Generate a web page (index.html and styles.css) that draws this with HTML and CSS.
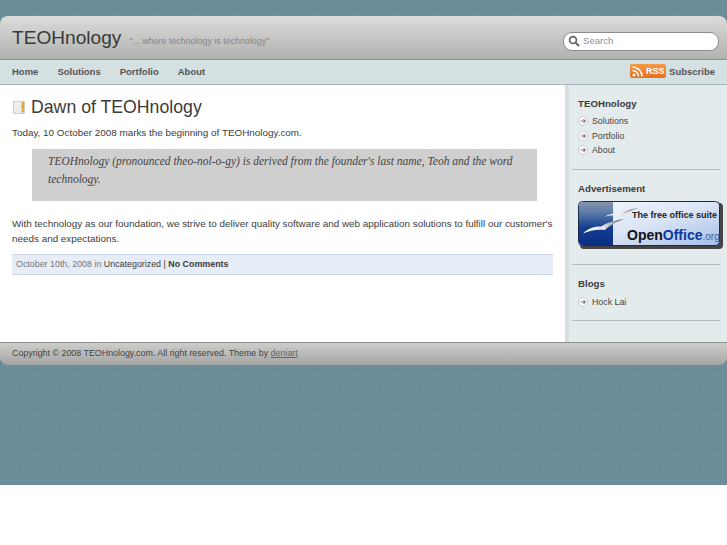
FILE: index.html
```html
<!DOCTYPE html>
<html lang="en">
<head>
    <meta charset="UTF-8">
    <title>TEOHnology</title>
    <link rel="stylesheet" href="styles.css">
</head>
<body>
    <div class="page">
        <header class="header">
            <div class="brand">
                <h1>TEOHnology</h1>
                <span class="tagline">"... where technology is technology"</span>
            </div>
            <div class="search">
                <svg width="12" height="12" viewBox="0 0 12 12" fill="none">
                    <circle cx="5" cy="5" r="3.4" stroke="#666" stroke-width="1.7"/>
                    <path d="M7.6 7.6 L11 11" stroke="#666" stroke-width="2"/>
                </svg>
                <span>Search</span>
            </div>
        </header>
        <nav class="nav">
            <ul>
                <li>Home</li>
                <li>Solutions</li>
                <li>Portfolio</li>
                <li>About</li>
            </ul>
            <div class="subscribe">
                <span class="rss">
                    <svg width="11" height="11" viewBox="0 0 11 11" fill="none">
                        <circle cx="2" cy="9" r="1.5" fill="#fff"/>
                        <path d="M.5 4.5a6 6 0 0 1 6 6M.5 1a9.500 9.500 0 0 1 9.500 9.500" stroke="#fff" stroke-width="1.6"/>
                    </svg>
                    RSS
                </span>
                <span>Subscribe</span>
            </div>
        </nav>
        <div class="columns">
            <main class="main">
                <h2 class="post-title">
                    <svg width="12" height="13" viewBox="0 0 12 13">
                        <rect width="12" height="13" rx="1" fill="#cfcfcb"/>
                        <rect x="1" y="1" width="7" height="11" fill="#eeeeea"/>
                        <rect x="9" y="1" width="2" height="7" fill="#e8a23c"/>
                        <rect x="9" y="9" width="2" height="2" fill="#e8a23c"/>
                    </svg>
                    Dawn of TEOHnology
                </h2>
                <p>Today, 10 October 2008 marks the beginning of TEOHnology.com.</p>
                <blockquote>TEOHnology (pronounced theo-nol-o-gy) is derived from the founder's last name, Teoh and the word technology.</blockquote>
                <p>With technology as our foundation, we strive to deliver quality software and web application solutions to fulfill our customer's needs and expectations.</p>
                <div class="post-meta">
                    <span class="date">October 10th, 2008 in</span> Uncategorized | <b>No Comments</b>
                </div>
            </main>
            <aside class="sidebar">
                <section class="widget">
                    <h3>TEOHnology</h3>
                    <ul>
                        <li><svg class="bullet" viewBox="0 0 10 10"><circle cx="5" cy="5" r="4.500" fill="#fff" stroke="#c4c8c8"/><path d="M2.500 5H7M5.500 3.200 7.300 5 5.500 6.800" fill="none" stroke="#777" stroke-width="1.100"/></svg>Solutions</li>
                        <li><svg class="bullet" viewBox="0 0 10 10"><circle cx="5" cy="5" r="4.500" fill="#fff" stroke="#c4c8c8"/><path d="M2.500 5H7M5.500 3.200 7.300 5 5.500 6.800" fill="none" stroke="#777" stroke-width="1.100"/></svg>Portfolio</li>
                        <li><svg class="bullet" viewBox="0 0 10 10"><circle cx="5" cy="5" r="4.500" fill="#fff" stroke="#c4c8c8"/><path d="M2.500 5H7M5.500 3.200 7.300 5 5.500 6.800" fill="none" stroke="#777" stroke-width="1.100"/></svg>About</li>
                    </ul>
                </section>
                <section class="widget ad">
                    <h3>Advertisement</h3>
                    <svg class="banner" width="145" height="48" viewBox="0 0 145 48">
                        <defs>
                            <linearGradient id="sky" x1="0" y1="0" x2="1" y2="1">
                                <stop offset="0" stop-color="#f6f8fc"/>
                                <stop offset=".5" stop-color="#dbe5f5"/>
                                <stop offset="1" stop-color="#a5bee8"/>
                            </linearGradient>
                            <linearGradient id="deep" x1="0" y1="0" x2="0" y2="1">
                                <stop offset="0" stop-color="#8696ae"/>
                                <stop offset=".25" stop-color="#5c7ba8"/>
                                <stop offset=".6" stop-color="#123d90"/>
                                <stop offset="1" stop-color="#0b2f86"/>
                            </linearGradient>
                            <linearGradient id="gull" x1="0" y1="0" x2="1" y2="0">
                                <stop offset="0" stop-color="#fff"/>
                                <stop offset=".5" stop-color="#e4e6ea"/>
                                <stop offset="1" stop-color="#5c6068"/>
                            </linearGradient>
                        </defs>
                        <rect x="2" y="2" width="143" height="46" rx="4" fill="#444"/>
                        <rect x=".5" y=".5" width="141" height="44" rx="4" fill="url(#sky)" stroke="#1c2c48"/>
                        <path d="M1 5a4 4 0 0 1 4-4h30v43H5a4 4 0 0 1-4-4z" fill="url(#deep)"/>
                        <path d="M27 15.500C32 12.500 38 12 42 12.500C47 9.500 54 7.500 61 7C54 9 48 11.500 44 15C39 14 33 14 27 15.500Z" fill="url(#gull)"/>
                        <path d="M5 32.500C10 27 17 25 23 25.500C29 21.500 37 19 46 18C38 21 31 25 27 29C20 28 12 29 5 32.500Z" fill="url(#gull)"/>
                        <text class="banner-small" x="54" y="17">The free office suite</text>
                        <text class="banner-big" x="49" y="39">Open<tspan fill="#0b3a9c">Office</tspan><tspan class="banner-org" fill="#3b5f9e">.org</tspan></text>
                    </svg>
                </section>
                <section class="widget">
                    <h3>Blogs</h3>
                    <ul>
                        <li><svg class="bullet" viewBox="0 0 10 10"><circle cx="5" cy="5" r="4.500" fill="#fff" stroke="#c4c8c8"/><path d="M2.500 5H7M5.500 3.200 7.300 5 5.500 6.800" fill="none" stroke="#777" stroke-width="1.100"/></svg>Hock Lai</li>
                    </ul>
                </section>
            </aside>
        </div>
        <footer class="footer">Copyright © 2008 TEOHnology.com. All right reserved. Theme by <a href="#">deniart</a></footer>
    </div>
</body>
</html>
```

FILE: styles.css
```css
html {
    background: #fff;
}
body {
    margin: 0;
    height: 485px;
    padding-top: 16px;
    box-sizing: border-box;
    background-color: #6b8e9b;
    background-image:
        linear-gradient(90deg, rgba(255,255,255,.02) 1px, transparent 1px),
        linear-gradient(rgba(0,0,0,.02) 1px, transparent 1px),
        linear-gradient(90deg, rgba(0,0,0,.015) 1px, transparent 1px),
        linear-gradient(rgba(255,255,255,.015) 1px, transparent 1px);
    background-size: 2px 3px, 3px 2px, 5px 7px, 7px 5px;
    font-family: "Liberation Sans", Arial, sans-serif;
    font-size: 9.9px;
    color: #3c3c3c;
}
ul {
    list-style: none;
    margin: 0;
    padding: 0;
}
.header {
    height: 44px;
    box-sizing: border-box;
    padding: 0 8px 0 12px;
    display: flex;
    justify-content: space-between;
    background: linear-gradient(#dcdcda, #b1b1af);
    border-radius: 8px 8px 0 0;
    border-bottom: 1px solid #8e8e8c;
}
.brand {
    display: flex;
    align-items: baseline;
    gap: 8px;
    padding-top: 11px;
}
.brand h1 {
    margin: 0;
    font-size: 19.1px;
    font-weight: normal;
    color: #3a3a3a;
}
.tagline {
    font-size: 8.9px;
    color: #858585;
}
.search {
    width: 156px;
    height: 19px;
    margin-top: 16px;
    box-sizing: border-box;
    display: flex;
    align-items: center;
    gap: 3px;
    padding: 0 0 2px 4px;
    background: #fff;
    border: 1px solid #8c8c8c;
    border-radius: 9px;
    font-size: 9.6px;
    color: #909090;
}
.nav {
    height: 25px;
    box-sizing: border-box;
    display: flex;
    justify-content: space-between;
    align-items: center;
    padding: 0 12px 2px;
    background: #d4e0e2;
    border-bottom: 1px solid #a9b4b6;
    font-size: 9.5px;
    font-weight: bold;
    color: #555;
}
.nav ul {
    display: flex;
    gap: 19px;
}
.subscribe {
    display: flex;
    align-items: center;
    gap: 3px;
}
.rss {
    display: flex;
    align-items: center;
    gap: 3px;
    width: 36px;
    height: 14px;
    box-sizing: border-box;
    padding-left: 2px;
    background: linear-gradient(#f79a45, #e3701c);
    border-radius: 2px;
    color: #fff;
    font-size: 9px;
}
.columns {
    display: flex;
    height: 257px;
    background: #fff;
}
.main {
    flex: 1;
    padding: 12px 12px 0;
}
.post-title {
    margin: 0 0 7px;
    display: flex;
    align-items: center;
    gap: 6px;
    padding-left: 1px;
    font-size: 17.700px;
    font-weight: normal;
    color: #3c3c3c;
}
.main p {
    margin: 0;
    line-height: 15px;
}
.main blockquote {
    margin: 9px 16px 15px 20px;
    padding: 3px 16px 0;
    height: 52px;
    box-sizing: border-box;
    background: #cfcfcf;
    font-family: "Liberation Serif", serif;
    font-style: italic;
    font-size: 11.5px;
    line-height: 18px;
    color: #444;
}
.post-meta {
    margin-top: 8px;
    height: 21px;
    box-sizing: border-box;
    padding-left: 4px;
    line-height: 19px;
    font-size: 8.9px;
    background: #e6edf7;
    border-top: 1px solid #cdd6e6;
    border-bottom: 1px solid #cdd6e6;
}
.date {
    color: #777;
}
.sidebar {
    width: 162px;
    box-sizing: border-box;
    padding: 0 7px 0 3px;
    background: #e4ebed;
    border-left: 4px solid #d5dfe1;
}
.widget {
    padding: 13px 0 11px 6px;
    border-bottom: 1px solid #b5bdbe;
}
.ad {
    padding-bottom: 15px;
}
.widget h3 {
    margin: 0 0 5px;
    font-size: 9.7px;
    line-height: 12px;
    color: #3c3c3c;
}
.widget:first-child h3 {
    margin-bottom: 4px;
}
.ad h3 {
    margin-bottom: 6px;
}
.widget li {
    display: flex;
    align-items: center;
    gap: 4px;
    height: 14.500px;
    font-size: 8.800px;
    color: #444;
}
.bullet {
    width: 10px;
    height: 10px;
}
.banner {
    display: block;
}
.banner-small {
    font: bold 9px "Liberation Sans", sans-serif;
    fill: #222;
}
.banner-big {
    font: bold 14px "Liberation Sans", sans-serif;
    fill: #111;
}
.banner-org {
    font-size: 10px;
    font-weight: normal;
}
.footer {
    height: 23px;
    box-sizing: border-box;
    padding-left: 12px;
    line-height: 20px;
    font-size: 8.9px;
    color: #444;
    background: linear-gradient(#cdcdcb, #a5a5a3);
    border-top: 1px solid #8e8e8c;
    border-radius: 0 0 8px 8px;
}
.footer a {
    color: #666;
}
```
